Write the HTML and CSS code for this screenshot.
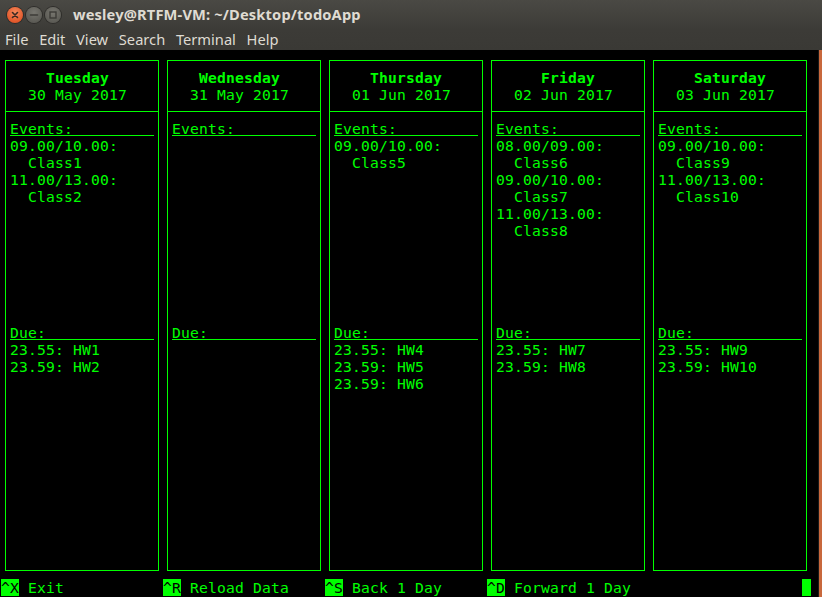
FILE: index.html
```html
<!DOCTYPE html>
<html>
<head>
<meta charset="utf-8">
<link rel="stylesheet" href="styles.css">
</head>
<body>
<div class="window">
  <div class="chrome">
    <div class="titlebar">
      <div class="buttons">
        <span class="btn close"><svg width="16" height="16" viewBox="0 0 16 16"><path d="M5.5 5.5 L10.5 10.5 M10.5 5.5 L5.5 10.5" stroke="#3a2a22" stroke-width="1.6" stroke-linecap="round"/></svg></span>
        <span class="btn min"><svg width="16" height="16" viewBox="0 0 16 16"><path d="M4.5 8 H11.5" stroke="#3c3b37" stroke-width="1.6" stroke-linecap="round"/></svg></span>
        <span class="btn max"><svg width="16" height="16" viewBox="0 0 16 16"><rect x="5" y="5" width="6" height="6" fill="none" stroke="#3c3b37" stroke-width="1.4"/></svg></span>
      </div>
      <div class="title">wesley@RTFM-VM: ~/Desktop/todoApp</div>
    </div>
    <div class="menubar">
      <span class="menu">File</span>
      <span class="menu">Edit</span>
      <span class="menu">View</span>
      <span class="menu">Search</span>
      <span class="menu">Terminal</span>
      <span class="menu">Help</span>
    </div>
  </div>
  <div class="terminal">
    <div class="screen">
      <div class="columns">
        <section class="day">
          <div class="box">
            <div class="head"><div class="line bold">    Tuesday</div><div class="line">  30 May 2017</div></div>
            <div class="body">
              <div class="events">
                <div class="label">Events:</div>
                <div class="line">09.00/10.00:</div>
                <div class="line">  Class1</div>
                <div class="line">11.00/13.00:</div>
                <div class="line">  Class2</div>
              </div>
              <div class="due">
                <div class="label">Due:</div>
                <div class="line">23.55: HW1</div>
                <div class="line">23.59: HW2</div>
              </div>
            </div>
          </div>
        </section>
        <section class="day">
          <div class="box">
            <div class="head"><div class="line bold">   Wednesday</div><div class="line">  31 May 2017</div></div>
            <div class="body">
              <div class="events">
                <div class="label">Events:</div>
              </div>
              <div class="due">
                <div class="label">Due:</div>
              </div>
            </div>
          </div>
        </section>
        <section class="day">
          <div class="box">
            <div class="head"><div class="line bold">    Thursday</div><div class="line">  01 Jun 2017</div></div>
            <div class="body">
              <div class="events">
                <div class="label">Events:</div>
                <div class="line">09.00/10.00:</div>
                <div class="line">  Class5</div>
              </div>
              <div class="due">
                <div class="label">Due:</div>
                <div class="line">23.55: HW4</div>
                <div class="line">23.59: HW5</div>
                <div class="line">23.59: HW6</div>
              </div>
            </div>
          </div>
        </section>
        <section class="day">
          <div class="box">
            <div class="head"><div class="line bold">     Friday</div><div class="line">  02 Jun 2017</div></div>
            <div class="body">
              <div class="events">
                <div class="label">Events:</div>
                <div class="line">08.00/09.00:</div>
                <div class="line">  Class6</div>
                <div class="line">09.00/10.00:</div>
                <div class="line">  Class7</div>
                <div class="line">11.00/13.00:</div>
                <div class="line">  Class8</div>
              </div>
              <div class="due">
                <div class="label">Due:</div>
                <div class="line">23.55: HW7</div>
                <div class="line">23.59: HW8</div>
              </div>
            </div>
          </div>
        </section>
        <section class="day">
          <div class="box">
            <div class="head"><div class="line bold">    Saturday</div><div class="line">  03 Jun 2017</div></div>
            <div class="body">
              <div class="events">
                <div class="label">Events:</div>
                <div class="line">09.00/10.00:</div>
                <div class="line">  Class9</div>
                <div class="line">11.00/13.00:</div>
                <div class="line">  Class10</div>
              </div>
              <div class="due">
                <div class="label">Due:</div>
                <div class="line">23.55: HW9</div>
                <div class="line">23.59: HW10</div>
              </div>
            </div>
          </div>
        </section>
      </div>
      <div class="statusbar">
        <span class="item"><span class="key">^X</span> Exit</span>
        <span class="item"><span class="key">^R</span> Reload Data</span>
        <span class="item"><span class="key">^S</span> Back 1 Day</span>
        <span class="item"><span class="key">^D</span> Forward 1 Day</span>
        <span class="cursor"></span>
      </div>
    </div>
    <div class="scrollbar"></div>
  </div>
</div>
</body>
</html>
```
FILE: styles.css
```css
html, body {
  margin: 0;
  padding: 0;
  background: #000;
}
.window {
  width: 822px;
  height: 597px;
  overflow: hidden;
  display: flex;
  flex-direction: column;
}
.chrome {
  height: 50px;
  background: linear-gradient(#4a4944, #3c3b37 60%, #3a3935);
  color: #dfdbd2;
  font-family: "Noto Sans", "Open Sans", sans-serif;
}
.titlebar {
  height: 27px;
  display: flex;
  align-items: center;
}
.buttons {
  display: flex;
  gap: 3px;
  margin-left: 7px;
  padding-top: 2px;
}
.btn {
  width: 16px;
  height: 16px;
  border-radius: 50%;
  display: block;
  box-sizing: border-box;
}
.btn svg { display: block; }
.close {
  background: radial-gradient(circle at 50% 35%, #f58a5c, #e2582b 70%, #c94720);
  box-shadow: 0 0 0 1px #2e2d2a;
}
.min, .max {
  background: radial-gradient(circle at 50% 35%, #77766f, #5d5c56 70%, #53524d);
  box-shadow: 0 0 0 1px #2e2d2a;
}
.title {
  margin-left: 12px;
  font-weight: bold;
  font-size: 14.67px;
  letter-spacing: 0.15px;
  padding-top: 1px;
}
.menubar {
  height: 23px;
  display: flex;
  align-items: center;
  padding-left: 5px;
  gap: 10.7px;
  font-size: 14.67px;
  padding-top: 1px;
  box-sizing: border-box;
}
.terminal {
  flex: 1;
  display: flex;
  background: #000;
}
.screen {
  width: 818px;
  padding: 2px 0 0 1px;
  font-family: "DejaVu Sans Mono", monospace;
  font-size: 14.67px;
  line-height: 17px;
  letter-spacing: 0.168px;
  color: #00ff00;
}
.scrollbar {
  width: 3px;
  border-left: 1px solid #1a1a1a;
  background: #c8683c;
}
.columns {
  display: flex;
  height: 527px;
}
.day {
  width: 162px;
  flex: none;
}
.box {
  box-sizing: border-box;
  width: 154px;
  height: 511px;
  margin: 8px 0 0 4px;
  border: 1px solid #00ff00;
}
.head {
  padding: 8px 0 8px 4px;
  border-bottom: 1px solid #00ff00;
}
.line {
  height: 17px;
  white-space: pre;
}
.bold {
  font-weight: bold;
}
.body {
  padding: 8px 0 0 4px;
}
.events {
  height: 204px;
}
.label {
  position: relative;
  height: 17px;
  white-space: pre;
}
.label::after {
  content: "";
  position: absolute;
  left: 0;
  top: 15px;
  width: 144px;
  height: 1px;
  background: #00ff00;
}
.statusbar {
  display: flex;
  width: 810px;
  height: 17px;
}
.item {
  width: 162px;
  flex: none;
  white-space: pre;
  height: 17px;
}
.key {
  display: inline-block;
  vertical-align: top;
  width: 18px;
  height: 17px;
  background: #00ff00;
  color: #000;
}
.cursor {
  margin-left: auto;
  width: 9px;
  height: 17px;
  background: #00ff00;
}
```
